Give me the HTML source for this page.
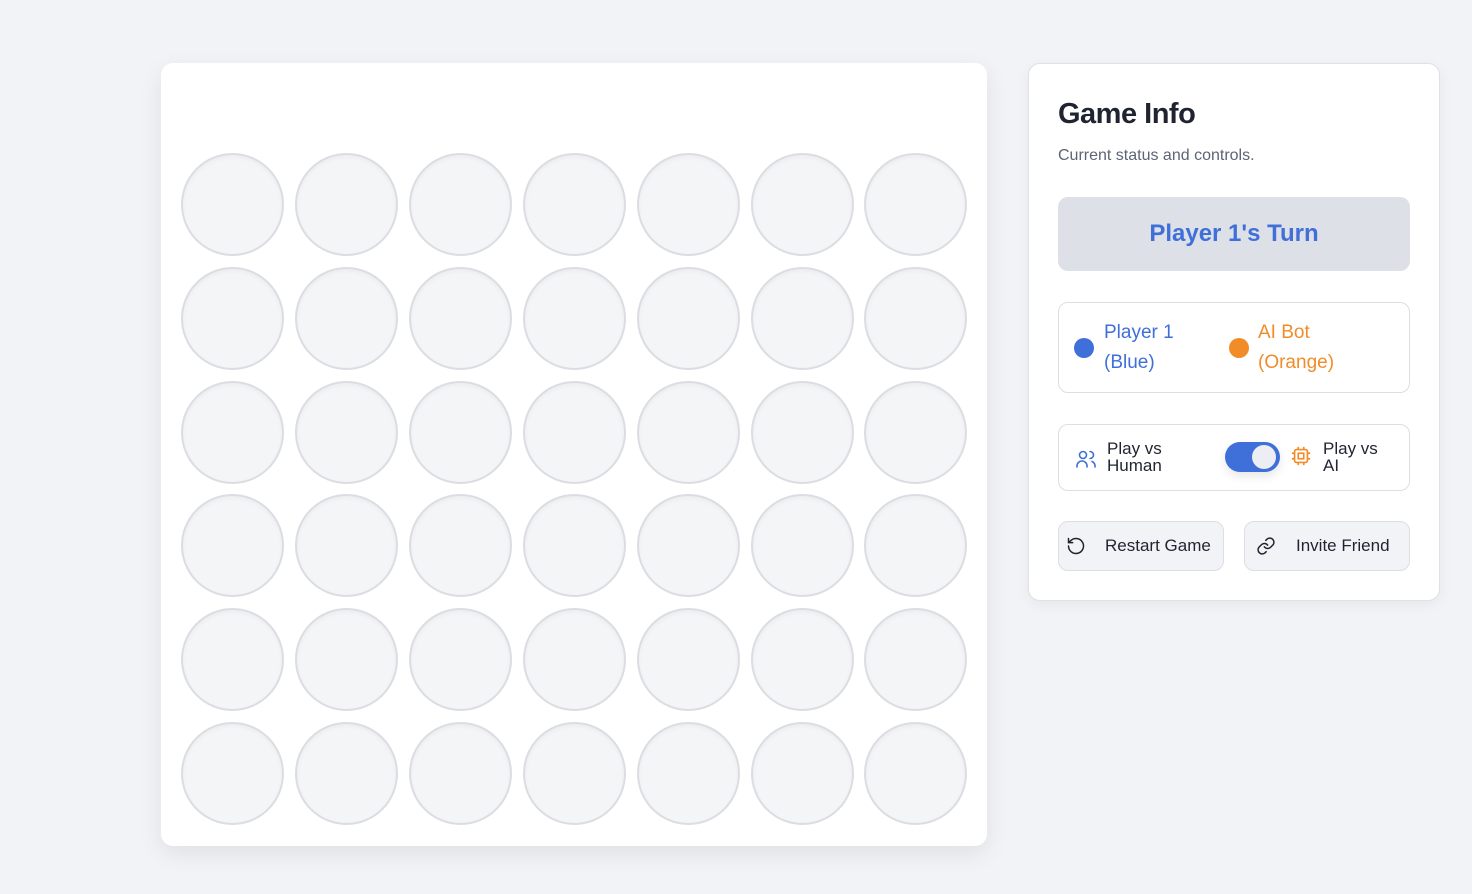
<!DOCTYPE html>
<html><head><style>
*{box-sizing:border-box;margin:0;padding:0}
body{width:1472px;height:894px;background:#f2f3f6;font-family:"Liberation Sans",sans-serif;position:relative;overflow:hidden}
.board{position:absolute;left:161px;top:63px;width:826px;height:783px;background:#fff;border-radius:12px;box-shadow:0 8px 24px rgba(0,0,0,.08)}
.c{position:absolute;width:103px;height:103px;border-radius:50%;background:#f4f5f7;border:2px solid #dcdde3;box-shadow:inset 0 2px 4px rgba(0,0,0,.04)}
.info{position:absolute;left:1028px;top:63px;width:412px;height:538px;background:#fff;border:1px solid #dfe1e6;border-radius:12px;box-shadow:0 4px 14px rgba(0,0,0,.05)}
.abs{position:absolute}
.box{position:absolute;border:1px solid #dcdee4;border-radius:10px}
.btn{position:absolute;top:457px;height:50px;border:1px solid #dcdee4;border-radius:10px;background:#f2f3f6;font-size:17px;color:#1f2430}
</style></head><body>
<div class="board">
<div id="g"></div>
</div>
<script>
var g=document.getElementById('g'),h='';
var xs=[20,134,248,362,476,590,703],ys=[90,204,318,431,545,659];
ys.forEach(function(y){xs.forEach(function(x){h+='<div class="c" style="left:'+x+'px;top:'+y+'px"></div>'})});
g.innerHTML=h;
</script>
<div class="info">
<div class="abs" style="left:29px;top:34px;font-size:29px;font-weight:bold;color:#1f2430;letter-spacing:-.5px">Game Info</div>
<div class="abs" style="left:29px;top:83px;font-size:16px;color:#5d6475">Current status and controls.</div>
<div class="abs" style="left:29px;top:133px;width:352px;height:74px;background:#dde0e7;border-radius:10px;text-align:center;line-height:74px;font-size:24px;font-weight:bold;color:#3f6fd8">Player 1's Turn</div>
<div class="box" style="left:29px;top:238px;width:352px;height:91px">
<div class="abs" style="left:15px;top:35px;width:20px;height:20px;border-radius:50%;background:#3f6fd8"></div>
<div class="abs" style="left:45px;top:15px;font-size:19px;line-height:30px;color:#3f6fd8">Player 1<br>(Blue)</div>
<div class="abs" style="left:170px;top:35px;width:20px;height:20px;border-radius:50%;background:#f28c28"></div>
<div class="abs" style="left:199px;top:15px;font-size:19px;line-height:30px;color:#f28c28">AI Bot<br>(Orange)</div>
</div>
<div class="box" style="left:29px;top:360px;width:352px;height:67px">
<svg class="abs" style="left:15px;top:22px" width="24" height="24" viewBox="0 0 24 24" fill="none" stroke="#3f6fd8" stroke-width="1.6" stroke-linecap="round"><circle cx="9" cy="8" r="3.5"/><path d="M3 20v-1a5 5 0 0 1 10 0v1M16 4.5a3.5 3.5 0 0 1 0 7M21 20v-1a5 5 0 0 0-3-4.5"/></svg>
<div class="abs" style="left:48px;top:15px;font-size:17px;line-height:17px;color:#1f2430">Play vs<br>Human</div>
<div class="abs" style="left:166px;top:17px;width:55px;height:30px;border-radius:15px;background:#3f6fd8;box-shadow:0 4px 10px rgba(0,0,0,.1)"><div class="abs" style="left:27px;top:3px;width:24px;height:24px;border-radius:50%;background:#eceef3"></div></div>
<svg class="abs" style="left:231px;top:20px" width="22" height="22" viewBox="0 0 24 24" fill="none" stroke="#f28c28" stroke-width="1.8"><rect x="5" y="5" width="14" height="14" rx="2"/><rect x="9" y="9" width="6" height="6"/><path d="M9 2v3M15 2v3M9 19v3M15 19v3M2 9h3M2 15h3M19 9h3M19 15h3"/></svg>
<div class="abs" style="left:264px;top:15px;font-size:17px;line-height:17px;color:#1f2430">Play vs<br>AI</div>
</div>
<div class="btn" style="left:29px;width:166px"><svg class="abs" style="left:7px;top:14px" width="20" height="20" viewBox="0 0 24 24" fill="none" stroke="#1f2430" stroke-width="1.8" stroke-linecap="round"><path d="M3 12a9 9 0 1 0 3-6.7L3 8M3 3v5h5"/></svg><span class="abs" style="left:46px;top:14px">Restart Game</span></div>
<div class="btn" style="left:215px;width:166px"><svg class="abs" style="left:11px;top:14px" width="20" height="20" viewBox="0 0 24 24" fill="none" stroke="#1f2430" stroke-width="1.8" stroke-linecap="round"><path d="M10 13a5 5 0 0 0 7.5.5l3-3a5 5 0 0 0-7-7l-1.7 1.7"/><path d="M14 11a5 5 0 0 0-7.5-.5l-3 3a5 5 0 0 0 7 7l1.7-1.7"/></svg><span class="abs" style="left:51px;top:14px">Invite Friend</span></div>
</div>
</body></html>
